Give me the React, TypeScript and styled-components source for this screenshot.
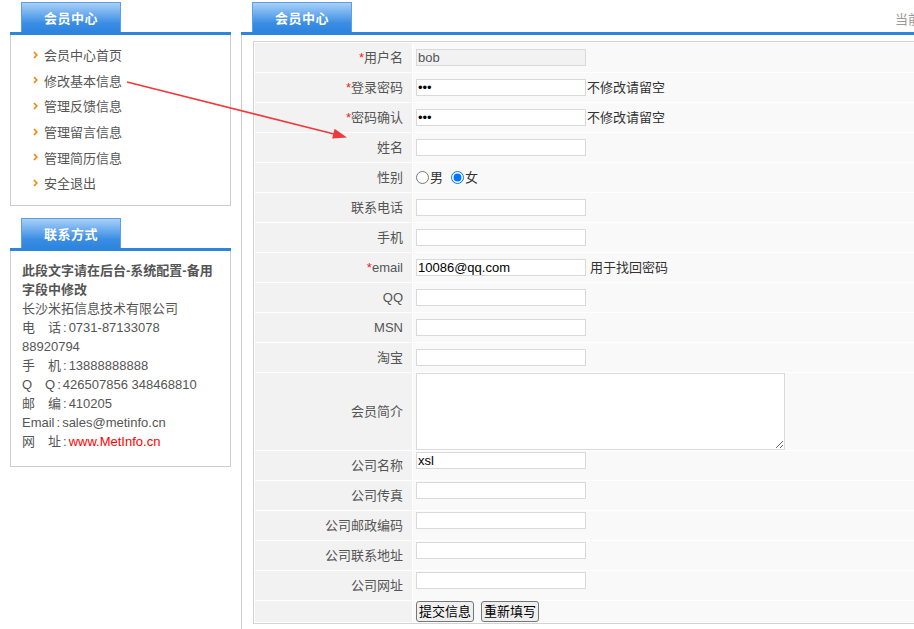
import React from 'react'
import styled, { createGlobalStyle } from 'styled-components'

const GlobalStyle = createGlobalStyle`
  html, body {
    margin: 0;
    padding: 0;
    background: #fff;
    overflow: hidden;
  }
  body {
    font-family: "Liberation Sans", "Noto Sans CJK SC", sans-serif;
    font-size: 13px;
    color: #555;
  }
`

const Page = styled.div`
  position: relative;
  display: flex;
  align-items: flex-start;
  width: 1000px;
  height: 629px;
  padding: 2px 0 0 10px;
  box-sizing: border-box;
`

const Sidebar = styled.div`
  width: 221px;
  flex-shrink: 0;
  margin-right: 10px;
`

const SectionHead = styled.div<{ $gap?: number }>`
  display: flex;
  padding-left: 11px;
  margin-top: ${(p) => p.$gap || 0}px;
  border-bottom: 3px solid #2d86de;
`

const Tab = styled.div`
  flex-shrink: 0;
  width: 100px;
  height: 30px;
  box-sizing: border-box;
  display: flex;
  align-items: center;
  justify-content: center;
  border: 1px solid #5c9fe6;
  border-bottom: none;
  background: linear-gradient(to bottom, #a8d0f6 0%, #69aaee 40%, #3a8de3 70%, #2d84de 100%);
  color: #fff;
  font-weight: bold;
  font-size: 13px;
  letter-spacing: 0.5px;
`

const MenuBox = styled.ul`
  list-style: none;
  margin: 0;
  padding: 7px 0 9px 22px;
  border: 1px solid #ccc;
  border-top: none;
`

const MenuItem = styled.li`
  display: flex;
  align-items: center;
  gap: 6px;
  height: 25.6px;
  color: #555;
`

const ContactBox = styled.div`
  padding: 10px 11px 15px 11px;
  border: 1px solid #ccc;
  border-top: none;
  line-height: 19px;
  color: #555;
`

const ContactTitle = styled.div`
  font-weight: bold;
`

const Colon = styled.span`
  margin: 0 2px 0 2px;
`

const Red = styled.span`
  color: #f00;
`

const Main = styled.div`
  width: 720px;
  flex-shrink: 0;
`

const MainHead = styled.div`
  display: flex;
  padding-left: 11px;
  border-bottom: 3px solid #2d86de;
  overflow: hidden;
`

const Location = styled.div`
  flex-shrink: 0;
  margin-left: 543px;
  padding-top: 7px;
  color: #999;
  white-space: nowrap;
`

const MainBody = styled.div`
  border-left: 1px solid #ccc;
  padding: 6px 0 0 11px;
  height: 600px;
`

const FormTable = styled.div`
  display: grid;
  grid-template-columns: 157px 1fr;
  gap: 1px;
  padding: 1px;
  width: 700px;
  background: #fff;
  border: 1px solid #d3d3d3;
`

const LabelCell = styled.div<{ $h?: number }>`
  display: flex;
  align-items: center;
  justify-content: flex-end;
  padding-right: 9px;
  min-height: ${(p) => p.$h ?? 29}px;
  background: #f2f2f2;
  line-height: 16px;
  color: #555;
`

const Star = styled.span`
  color: #e22;
`

const ValueCell = styled.div<{ $top?: boolean; $h?: number }>`
  display: flex;
  align-items: ${(p) => (p.$top ? 'flex-start' : 'center')};
  padding: ${(p) => (p.$top ? '1px 0 0 3px' : '0 0 0 3px')};
  min-height: ${(p) => p.$h ?? 29}px;
  box-sizing: border-box;
  background: #f9f9f9;
  line-height: 16px;
  color: #333;
`

const TextInput = styled.input<{ $readonly?: boolean }>`
  width: 170px;
  height: 17px;
  box-sizing: border-box;
  margin: 0;
  padding: 0 1px;
  border: 1px solid #d9d9d9;
  background: ${(p) => (p.$readonly ? '#f2f2f2' : '#fff')};
  color: ${(p) => (p.$readonly ? '#555' : '#000')};
  font-family: "Liberation Sans", "Noto Sans CJK SC", sans-serif;
  font-size: 13px;
  outline: none;
`

const Note = styled.span<{ $gap: number }>`
  margin-left: ${(p) => p.$gap}px;
`

const Radio = styled.input<{ $gap: number }>`
  width: 13px;
  height: 13px;
  margin: 0 1px 0 ${(p) => p.$gap}px;
`

const TextArea = styled.textarea`
  display: block;
  width: 369px;
  height: 77px;
  box-sizing: border-box;
  margin: 0;
  border: 1px solid #d9d9d9;
  background: #fff;
  resize: both;
  outline: none;
`

const Buttons = styled.div`
  display: flex;
  gap: 7px;
`

const Button = styled.button`
  height: 21px;
  box-sizing: border-box;
  padding: 0 2px;
  margin: 0;
  border: 1px solid #767676;
  border-radius: 3px;
  background: #efefef;
  color: #000;
  font-family: "Liberation Sans", "Noto Sans CJK SC", sans-serif;
  font-size: 13px;
  line-height: 17px;
`

const Overlay = styled.svg`
  position: absolute;
  left: 0;
  top: 0;
  pointer-events: none;
`

const Chevron = () => (
  <svg width="5" height="8" viewBox="0 0 5 8">
    <path d="M1 1 L3.8 4 L1 7" fill="none" stroke="#f7860f" strokeWidth="1.7" />
  </svg>
)

type Row = {
  label: string
  req?: boolean
  kind?: 'text' | 'password' | 'radio' | 'textarea'
  value?: string
  readOnly?: boolean
  note?: string
  noteGap?: number
  top?: boolean
}

const rows: Row[] = [
  { label: '用户名', req: true, value: 'bob', readOnly: true },
  { label: '登录密码', req: true, kind: 'password', value: 'abc', note: '不修改请留空', noteGap: 1 },
  { label: '密码确认', req: true, kind: 'password', value: 'abc', note: '不修改请留空', noteGap: 1 },
  { label: '姓名' },
  { label: '性别', kind: 'radio' },
  { label: '联系电话' },
  { label: '手机' },
  { label: 'email', req: true, value: '10086@qq.com', note: '用于找回密码', noteGap: 4 },
  { label: 'QQ' },
  { label: 'MSN' },
  { label: '淘宝' },
  { label: '会员简介', kind: 'textarea' },
  { label: '公司名称', value: 'xsl', top: true },
  { label: '公司传真', top: true },
  { label: '公司邮政编码', top: true },
  { label: '公司联系地址', top: true },
  { label: '公司网址', top: true },
]

const menu = ['会员中心首页', '修改基本信息', '管理反馈信息', '管理留言信息', '管理简历信息', '安全退出']

const contacts: [string, React.ReactNode][] = [
  ['电　话', '0731-87133078'],
  ['手　机', '13888888888'],
  ['Q　Q', '426507856 348468810'],
  ['邮　编', '410205'],
  ['Email', 'sales@metinfo.cn'],
  ['网　址', <Red>www.MetInfo.cn</Red>],
]

const Field = ({ row }: { row: Row }) => {
  if (row.kind === 'radio') {
    return (
      <>
        <Radio type="radio" name="sex" $gap={0} />
        男
        <Radio type="radio" name="sex" $gap={8} defaultChecked />
        女
      </>
    )
  }
  if (row.kind === 'textarea') return <TextArea />
  return (
    <>
      <TextInput
        type={row.kind === 'password' ? 'password' : 'text'}
        defaultValue={row.value || ''}
        readOnly={row.readOnly}
        $readonly={row.readOnly}
      />
      {row.note && <Note $gap={row.noteGap || 0}>{row.note}</Note>}
    </>
  )
}

export default function App() {
  return (
    <>
      <GlobalStyle />
      <Page>
        <Sidebar>
          <SectionHead>
            <Tab>会员中心</Tab>
          </SectionHead>
          <MenuBox>
            {menu.map((m) => (
              <MenuItem key={m}>
                <Chevron />
                {m}
              </MenuItem>
            ))}
          </MenuBox>

          <SectionHead $gap={12}>
            <Tab>联系方式</Tab>
          </SectionHead>
          <ContactBox>
            <ContactTitle>此段文字请在后台-系统配置-备用字段中修改</ContactTitle>
            长沙米拓信息技术有限公司
            {contacts.map(([k, v], i) => (
              <React.Fragment key={k}>
                <br />
                {k}
                <Colon>:</Colon>
                {v}
                {i === 0 && (
                  <>
                    <br />
                    88920794
                  </>
                )}
              </React.Fragment>
            ))}
          </ContactBox>
        </Sidebar>

        <Main>
          <MainHead>
            <Tab>会员中心</Tab>
            <Location>当前位置：会员中心</Location>
          </MainHead>
          <MainBody>
            <FormTable>
              {rows.map((r) => (
                <React.Fragment key={r.label}>
                  <LabelCell>
                    {r.req && <Star>*</Star>}
                    {r.label}
                  </LabelCell>
                  <ValueCell $top={r.top}>
                    <Field row={r} />
                  </ValueCell>
                </React.Fragment>
              ))}
              <LabelCell $h={21} />
              <ValueCell $h={21}>
                <Buttons>
                  <Button type="button">提交信息</Button>
                  <Button type="button">重新填写</Button>
                </Buttons>
              </ValueCell>
            </FormTable>
          </MainBody>
        </Main>

        <Overlay width="914" height="629" viewBox="0 0 914 629">
          <line x1="127" y1="82" x2="336" y2="134.5" stroke="#ee3a3a" strokeWidth="1.6" />
          <polygon points="347,137.5 332.2,138.6 334.6,128.7" fill="#ee3a3a" />
        </Overlay>
      </Page>
    </>
  )
}
